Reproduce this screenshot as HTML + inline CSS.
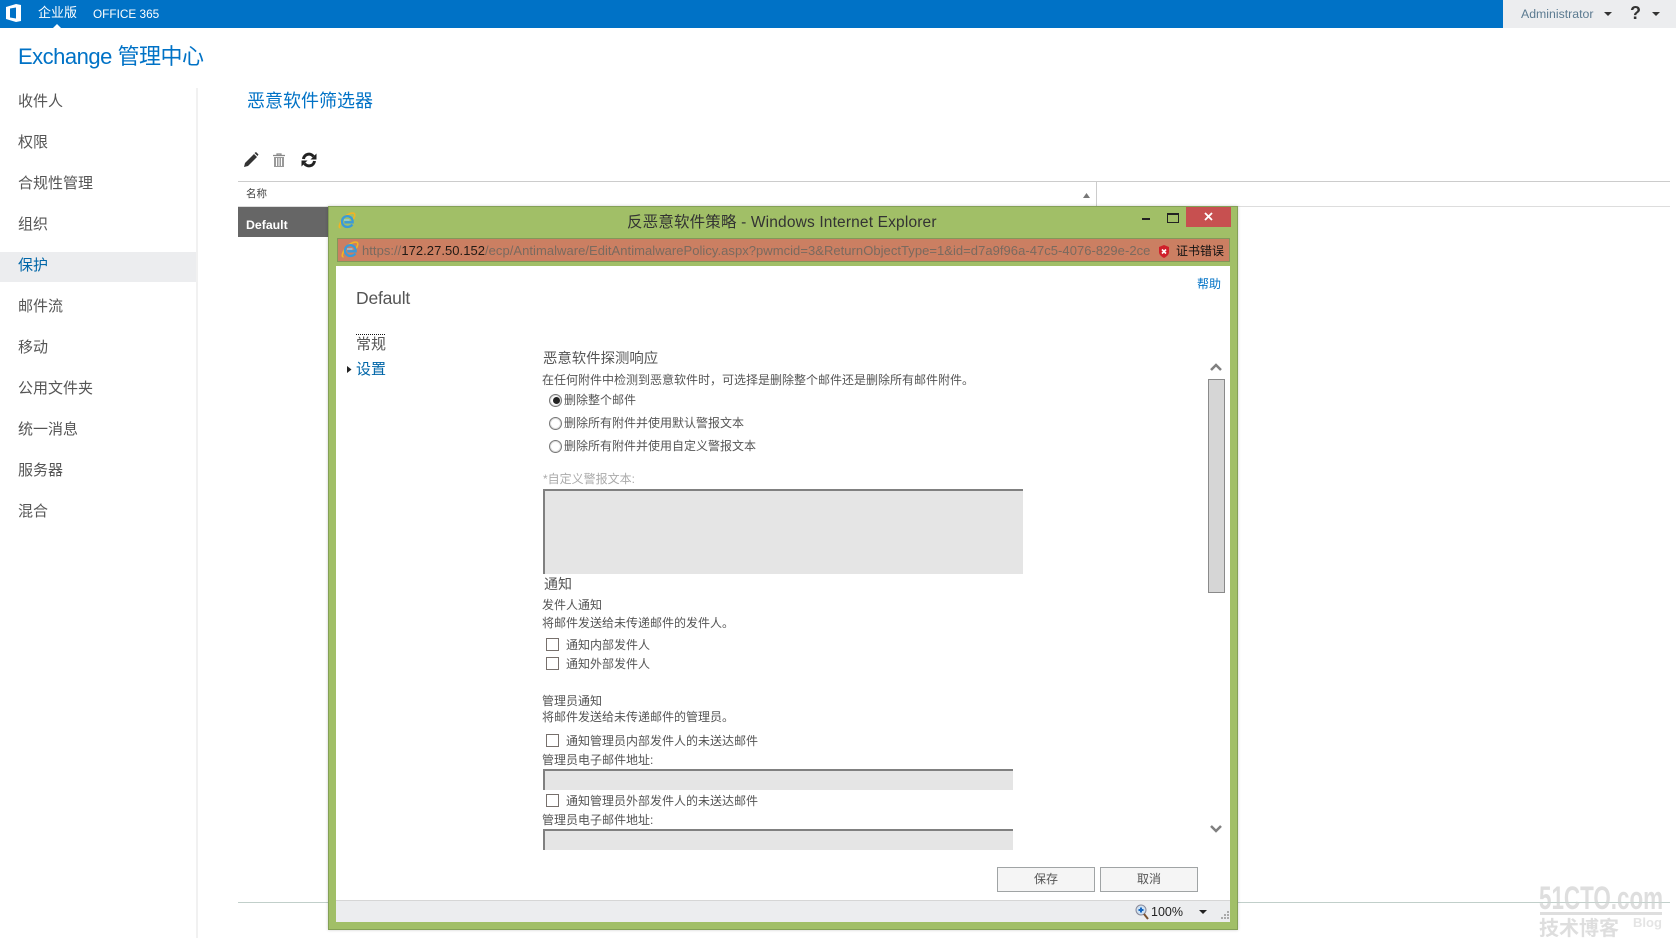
<!DOCTYPE html>
<html lang="zh-CN"><head><meta charset="utf-8"><title>Exchange 管理中心</title>
<style>
html,body{margin:0;padding:0;background:#fff}
body{position:relative;width:1676px;height:951px;overflow:hidden;font-family:"Liberation Sans","Noto Sans CJK SC",sans-serif;color:#555}
.a,.t{position:absolute}
.t{line-height:20px;height:20px;white-space:nowrap;font-size:12px;color:#555}
.n{left:18px;font-size:15px;color:#555}
.cb{position:absolute;left:546px;width:11px;height:11px;border:1px solid #77706c;background:#fff}
.rd{position:absolute;left:549px;width:11px;height:11px;border:1px solid #777;border-radius:50%;background:#fff;box-shadow:inset 0 0 0 1px #ddd}
.inp{position:absolute;background:#e5e5e5;border-top:2px solid #808080;border-left:2px solid #808080;box-sizing:border-box}
.btn{position:absolute;top:867px;height:25px;box-sizing:border-box;border:1px solid #a0a4a5;background:#f5f5f5;text-align:center;line-height:22px;font-size:12px;color:#555}
svg{position:absolute;overflow:visible}
</style></head><body>

<div class="a" style="left:0;top:0;width:1503px;height:28px;background:#0072c6"></div>
<div class="a" style="left:1503px;top:0;width:173px;height:28px;background:#ecedef"></div>
<svg style="left:5px;top:3px" width="18" height="20" viewBox="0 0 18 20"><path d="M1 4 L11 1 L16 2 V18 L11 19 L1 16 Z M5 5.500 V14.500 L11 15.500 V4.500 Z" fill="#fff" fill-rule="evenodd"/></svg>
<div class="t" style="left:38px;top:3px;font-size:13px;color:#fff">企业版</div>
<div class="t" style="left:93px;top:4px;font-size:11.800px;color:#fff">OFFICE 365</div>
<svg style="left:53px;top:24px" width="8" height="4"><path d="M0 4 L4 0 L8 4Z" fill="#fff"/></svg>
<div class="t" style="left:1521px;top:4px;font-size:12.300px;color:#5b7a90">Administrator</div>
<svg style="left:1604px;top:12px" width="8" height="5"><path d="M0 0H8L4 4Z" fill="#333"/></svg>
<div class="t" style="left:1630px;top:3px;font-size:18px;font-weight:bold;color:#333">?</div>
<svg style="left:1652px;top:12px" width="8" height="5"><path d="M0 0H8L4 4Z" fill="#333"/></svg>

<div class="t" style="left:18px;top:46px;height:22px;line-height:22px;font-size:22px;color:#0072c6;letter-spacing:-.5px">Exchange 管理中心</div>

<div class="a" style="left:196px;top:88px;width:2px;height:850px;background:#f1f1f1"></div>
<div class="a" style="left:0;top:252px;width:196px;height:30px;background:#ecedef"></div>
<div class="t n" style="top:92px">收件人</div>
<div class="t n" style="top:133px">权限</div>
<div class="t n" style="top:174px">合规性管理</div>
<div class="t n" style="top:215px">组织</div>
<div class="t n" style="top:256px;color:#0066a8">保护</div>
<div class="t n" style="top:297px">邮件流</div>
<div class="t n" style="top:338px">移动</div>
<div class="t n" style="top:379px">公用文件夹</div>
<div class="t n" style="top:420px">统一消息</div>
<div class="t n" style="top:461px">服务器</div>
<div class="t n" style="top:502px">混合</div>

<div class="t" style="left:247px;top:91px;font-size:18px;color:#0072c6">恶意软件筛选器</div>

<svg style="left:243px;top:152px" width="16" height="16" viewBox="0 0 16 16"><path d="M1 15 L2 11 L11 2 L14 5 L5 14 Z" fill="#333"/><path d="M11.500 1 L13 0 L15.500 2.500 L14.500 4Z" fill="#333"/></svg>
<svg style="left:272px;top:153px" width="14" height="14" viewBox="0 0 14 14"><path d="M1 2.500H13M5 2V1H9V2" stroke="#888" stroke-width="1.200" fill="none"/><path d="M2 4H12V14H2Z" fill="#999"/><path d="M4.500 5V13M7 5V13M9.500 5V13" stroke="#fff" stroke-width="1"/></svg>
<svg style="left:301px;top:152px" width="16" height="16" viewBox="0 0 16 16"><path d="M2.500 7 A5.500 5.500 0 0 1 12.500 4.500" fill="none" stroke="#222" stroke-width="3"/><path d="M9.500 7.500H15.500V1.500Z" fill="#222"/><path d="M13.500 9 A5.500 5.500 0 0 1 3.500 11.500" fill="none" stroke="#222" stroke-width="3"/><path d="M6.500 8.500H.5V14.500Z" fill="#222"/></svg>

<div class="a" style="left:238px;top:181px;width:1432px;height:1px;background:#ccc"></div>
<div class="a" style="left:238px;top:206px;width:1432px;height:1px;background:#ddd"></div>
<div class="a" style="left:1096px;top:181px;width:1px;height:25px;background:#ccc"></div>
<div class="t" style="left:246px;top:184px;font-size:10.500px;color:#444">名称</div>
<svg style="left:1083px;top:193px" width="8" height="6"><path d="M0 5H7L3.500 0Z" fill="#777"/></svg>
<div class="a" style="left:238px;top:207px;width:92px;height:30px;background:#666"></div>
<div class="t" style="left:246px;top:215px;font-size:12.300px;font-weight:bold;color:#fff">Default</div>
<div class="a" style="left:238px;top:902px;width:1432px;height:1px;background:#c8d2d0"></div>

<!-- watermark -->
<div class="t" style="left:1539px;top:882px;height:32px;line-height:32px;font-size:32px;font-weight:bold;color:#dedede;transform-origin:left;transform:scaleX(.7)">51CTO.com</div>
<div class="a" style="left:238px;top:902px;width:1432px;height:1px;background:rgba(190,205,200,.7)"></div>
<div class="a" style="left:1540px;top:912px;width:122px;height:3px;background:#dedede"></div>
<div class="t" style="left:1539px;top:919px;font-size:20px;font-weight:bold;color:#dedede">技术博客</div>
<div class="t" style="left:1633px;top:913px;font-size:13px;font-weight:bold;color:#e4e4e4">Blog</div>

<!-- window -->
<div class="a" style="left:328px;top:206px;width:910px;height:724px;box-sizing:border-box;background:#a1bf67;border:1px solid #84a056;box-shadow:0 0 3px rgba(0,0,0,.2)"></div>
<svg style="left:338px;top:212px" width="18" height="18" viewBox="0 0 18 18"><use href="#ie"/></svg>
<div class="t" style="left:627px;top:213px;font-size:15.500px;color:#333;letter-spacing:.16px">反恶意软件策略 - Windows Internet Explorer</div>
<div class="a" style="left:1142px;top:218px;width:8px;height:2px;background:#222"></div>
<div class="a" style="left:1167px;top:213px;width:10px;height:7px;border:1px solid #222;border-top-width:2px"></div>
<div class="a" style="left:1186px;top:207px;width:45px;height:20px;background:#c75050"></div>
<svg style="left:1204px;top:212px" width="9" height="9"><path d="M1 1L8 8M8 1L1 8" stroke="#fff" stroke-width="1.800"/></svg>

<div class="a" style="left:337px;top:238px;width:893px;height:24px;box-sizing:border-box;background:#cb7f62;border:1px solid #83975a"></div>
<svg style="left:341px;top:241px" width="18" height="18" viewBox="0 0 18 18"><defs><g id="ie"><path d="M2.500 15.500C.5 16.500 1 12.500 4 8C7 3.500 12.500 .3 15.800 1.300C17.500 2 16.800 5 15 7.500" fill="none" stroke="#f2b424" stroke-width="1.600"/><path d="M14.300 12.500C12.500 15.300 8 15.800 5.600 13.500C3 11 3.700 6.500 6.800 4.800C9.800 3.200 13.800 4.800 14.600 8.500L14.600 10.300H6.400" fill="none" stroke="#3a9ad9" stroke-width="2.300"/><path d="M6 8H11.500" stroke="#8fd0f2" stroke-width="1.300"/></g></defs><use href="#ie"/></svg>
<div class="t" style="left:362px;top:241px;font-size:13px;color:#7a6a5f;letter-spacing:.04px">https://<span style="color:#221a15">172.27.50.152</span>/ecp/Antimalware/EditAntimalwarePolicy.aspx?pwmcid=3&amp;ReturnObjectType=1&amp;id=d7a9f96a-47c5-4076-829e-2ce</div>
<svg style="left:1158px;top:245px" width="12" height="13" viewBox="0 0 12 13"><path d="M1 2L6 0L11 2V7C11 10 8 12 6 13C4 12 1 10 1 7Z" fill="#d0202a"/><path d="M4 4.500L8 8.500M8 4.500L4 8.500" stroke="#fff" stroke-width="1.600"/></svg>
<div class="t" style="left:1176px;top:241px;font-size:12px;color:#111">证书错误</div>

<div class="a" style="left:336px;top:266px;width:894px;height:634px;background:#fff"></div>
<div class="a" style="left:336px;top:900px;width:894px;height:22px;box-sizing:border-box;background:#ecedef;border-top:1px solid #d6d6d6"></div>

<div class="t" style="left:1197px;top:274px;font-size:12px;color:#0072c6">帮助</div>
<div class="t" style="left:356px;top:288px;font-size:17.500px;color:#555;letter-spacing:-.2px">Default</div>
<div class="a" style="left:356px;top:334px;width:29px;border-top:1px dotted #111"></div>
<div class="t" style="left:356px;top:335px;font-size:15px;color:#555">常规</div>
<svg style="left:347px;top:366px" width="5" height="8"><path d="M0 0L4.500 3.500L0 7Z" fill="#222"/></svg>
<div class="t" style="left:356px;top:360px;font-size:15px;color:#0066a8">设置</div>

<div class="t" style="left:543px;top:349px;font-size:14.400px">恶意软件探测响应</div>
<div class="t" style="left:542px;top:370px">在任何附件中检测到恶意软件时，可选择是删除整个邮件还是删除所有邮件附件。</div>
<div class="rd" style="top:394px"></div><div class="a" style="left:553px;top:397px;width:7px;height:7px;border-radius:50%;background:#222"></div>
<div class="t" style="left:564px;top:390px">删除整个邮件</div>
<div class="rd" style="top:417px"></div>
<div class="t" style="left:564px;top:413px">删除所有附件并使用默认警报文本</div>
<div class="rd" style="top:440px"></div>
<div class="t" style="left:564px;top:436px">删除所有附件并使用自定义警报文本</div>
<div class="t" style="left:543px;top:469px;color:#aaa">*自定义警报文本:</div>
<div class="inp" style="left:543px;top:489px;width:480px;height:85px"></div>
<div class="t" style="left:544px;top:574px;font-size:14px">通知</div>
<div class="t" style="left:542px;top:595px">发件人通知</div>
<div class="t" style="left:542px;top:613px">将邮件发送给未传递邮件的发件人。</div>
<div class="cb" style="top:638px"></div><div class="t" style="left:566px;top:635px">通知内部发件人</div>
<div class="cb" style="top:657px"></div><div class="t" style="left:566px;top:654px">通知外部发件人</div>
<div class="t" style="left:542px;top:691px">管理员通知</div>
<div class="t" style="left:542px;top:707px">将邮件发送给未传递邮件的管理员。</div>
<div class="cb" style="top:734px"></div><div class="t" style="left:566px;top:731px">通知管理员内部发件人的未送达邮件</div>
<div class="t" style="left:542px;top:750px">管理员电子邮件地址:</div>
<div class="inp" style="left:543px;top:769px;width:470px;height:21px"></div>
<div class="cb" style="top:794px"></div><div class="t" style="left:566px;top:791px">通知管理员外部发件人的未送达邮件</div>
<div class="t" style="left:542px;top:810px">管理员电子邮件地址:</div>
<div class="inp" style="left:543px;top:829px;width:470px;height:21px"></div>

<svg style="left:1210px;top:362px" width="12" height="10"><path d="M1 8L6 3L11 8" fill="none" stroke="#808080" stroke-width="2.500"/></svg>
<div class="a" style="left:1208px;top:379px;width:15px;height:212px;background:#d6d6d6;border:1px solid #8a8a8a"></div>
<svg style="left:1210px;top:824px" width="12" height="10"><path d="M1 2L6 7L11 2" fill="none" stroke="#808080" stroke-width="2.500"/></svg>

<div class="btn" style="left:997px;width:98px">保存</div>
<div class="btn" style="left:1100px;width:98px">取消</div>

<svg style="left:1135px;top:904px" width="14" height="16" viewBox="0 0 14 16"><circle cx="6" cy="6" r="5" fill="#cfe2f3" stroke="#889"/><path d="M3.500 6H8.500M6 3.500V8.500" stroke="#1565c0" stroke-width="2"/><path d="M9 10L13 15" stroke="#7a5230" stroke-width="2"/></svg>
<div class="t" style="left:1151px;top:902px;font-size:12.500px;color:#222">100%</div>
<svg style="left:1199px;top:910px" width="8" height="5"><path d="M0 0H8L4 4Z" fill="#222"/></svg>
<svg style="left:1221px;top:911px" width="8" height="8" fill="#aaa"><rect x="6" y="0" width="2" height="2"/><rect x="3" y="3" width="2" height="2"/><rect x="6" y="3" width="2" height="2"/><rect x="0" y="6" width="2" height="2"/><rect x="3" y="6" width="2" height="2"/><rect x="6" y="6" width="2" height="2"/></svg>
</body></html>
